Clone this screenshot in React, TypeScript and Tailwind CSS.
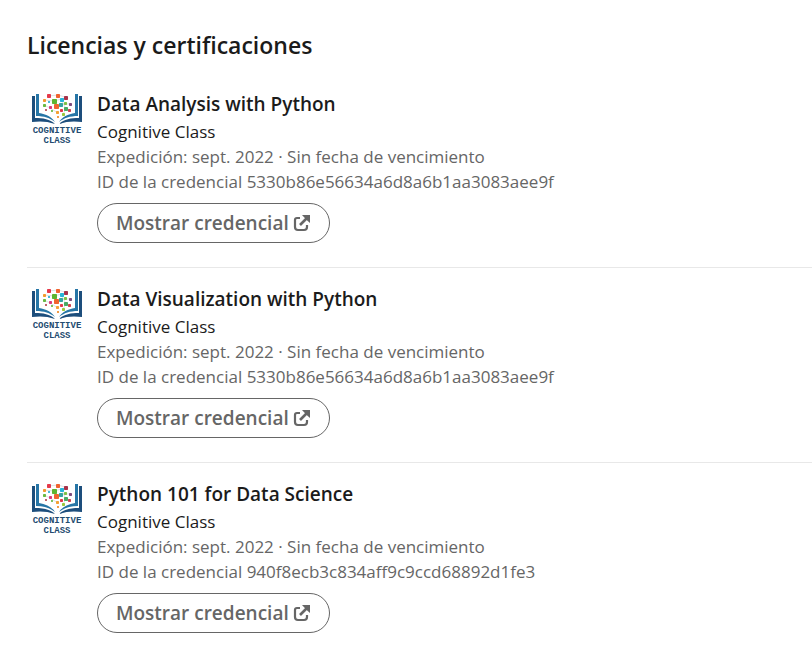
type Credential = { title: string; issuer: string; issued: string; id: string };

const credentials: Credential[] = [
  {
    title: "Data Analysis with Python",
    issuer: "Cognitive Class",
    issued: "Expedición: sept. 2022 · Sin fecha de vencimiento",
    id: "5330b86e56634a6d8a6b1aa3083aee9f",
  },
  {
    title: "Data Visualization with Python",
    issuer: "Cognitive Class",
    issued: "Expedición: sept. 2022 · Sin fecha de vencimiento",
    id: "5330b86e56634a6d8a6b1aa3083aee9f",
  },
  {
    title: "Python 101 for Data Science",
    issuer: "Cognitive Class",
    issued: "Expedición: sept. 2022 · Sin fecha de vencimiento",
    id: "940f8ecb3c834aff9c9ccd68892d1fe3",
  },
];

// x, y, size, colour of every tile that floats above the book
const tiles: [number, number, number, string][] = [
  [20, 5, 4, "#e5394a"],
  [29, 5, 4, "#f0642f"],
  [37, 7, 4, "#a8324a"],
  [16, 10, 3, "#f39a2d"],
  [25, 10, 5, "#5cb531"],
  [33, 9, 4, "#27b4d8"],
  [37, 13, 3, "#7dc142"],
  [16, 15, 3, "#68b843"],
  [21, 12, 2, "#27a9cf"],
  [27, 15, 5, "#f0642f"],
  [32, 14, 4, "#35a3a0"],
  [42, 14, 3, "#7d4b7e"],
  [22, 17, 3, "#d93a7b"],
  [18, 20, 2, "#b24a52"],
  [33, 20, 3, "#e5394a"],
  [37, 18, 4, "#49aa64"],
  [29, 22, 3, "#f5a032"],
  [41, 20, 3, "#d0434e"],
  [35, 24, 3, "#9cc83c"],
  [30, 27, 2, "#f08a24"],
  [24, 21, 2, "#68b843"],
];

function CognitiveClassLogo() {
  return (
    <svg viewBox="0 0 60 60" className="size-[60px] shrink-0" role="img" aria-label="Cognitive Class">
      <g stroke="#c5cdd2" strokeWidth="0.6" fill="none">
        <path d="M17 11 27 12 38 9M27 12 29 18 35 15 43 15M17 16 23 19 31 24M34 10 39 20 36 25M21 7 31 6 38 8" />
      </g>
      {tiles.map(([x, y, s, fill]) => (
        <rect key={`${x}-${y}`} x={x} y={y} width={s} height={s} rx="0.7" fill={fill} />
      ))}
      <g fill="#1d4e7c">
        <path d="M5 7H8V29C16 29 23 30 28 35C20 32 12 32 5 33Z" />
        <path d="M55 7H52V29C44 29 37 30 32 35C40 32 48 32 55 33Z" />
      </g>
      <g fill="#2675a6">
        <path d="M9 5H12V24C19 25 25 28 28 33C23 29 17 27 9 27Z" />
        <path d="M51 5H48V24C41 25 35 28 32 33C37 29 43 27 51 27Z" />
      </g>
      <g
        fill="#234c70"
        textAnchor="middle"
        className="font-['Liberation_Mono',monospace] text-[9px] font-bold"
      >
        <text x="30" y="44">COGNITIVE</text>
        <text x="30" y="54">CLASS</text>
      </g>
    </svg>
  );
}

function ExternalLinkIcon() {
  return (
    <svg viewBox="0 0 18 18" className="size-[18px]" aria-hidden="true" fill="none" stroke="currentColor">
      <path d="M7 4H4A2 2 0 0 0 2 6V13A3 3 0 0 0 5 16H11A3 3 0 0 0 14 13V11" strokeWidth="2.2" />
      <path d="M7 11 14 4" strokeWidth="2.6" />
      <path d="M9 1H17V9L14.2 6.4 11.6 3.8Z" fill="currentColor" stroke="none" />
    </svg>
  );
}

function CredentialItem({ title, issuer, issued, id }: Credential) {
  return (
    <li className="flex gap-[10px] border-b border-[#e8e8e8] pt-4 pb-6 last:border-b-0">
      <CognitiveClassLogo />
      <div className="min-w-0 flex-1 text-[17px] leading-[25px] text-[#666666]">
        <h3 className="text-[19px] leading-[30px] font-semibold text-[#1b1b1b]">{title}</h3>
        <p className="text-[#1b1b1b]">{issuer}</p>
        <p>{issued}</p>
        <p>ID de la credencial {id}</p>
        <button
          type="button"
          className="mt-[9px] flex h-10 items-center gap-1 rounded-full border border-[#666666] px-[18px] text-[19px] font-semibold"
        >
          Mostrar credencial
          <ExternalLinkIcon />
        </button>
      </div>
    </li>
  );
}

export default function App() {
  return (
    <main className="min-h-screen bg-white pt-7 pl-[27px] font-['Open_Sans','Noto_Sans',sans-serif]">
      <h2 className="mb-[11px] text-[23px] leading-[34px] font-semibold text-[#1b1b1b]">
        Licencias y certificaciones
      </h2>
      <ul>
        {credentials.map((credential) => (
          <CredentialItem key={credential.title} {...credential} />
        ))}
      </ul>
    </main>
  );
}
